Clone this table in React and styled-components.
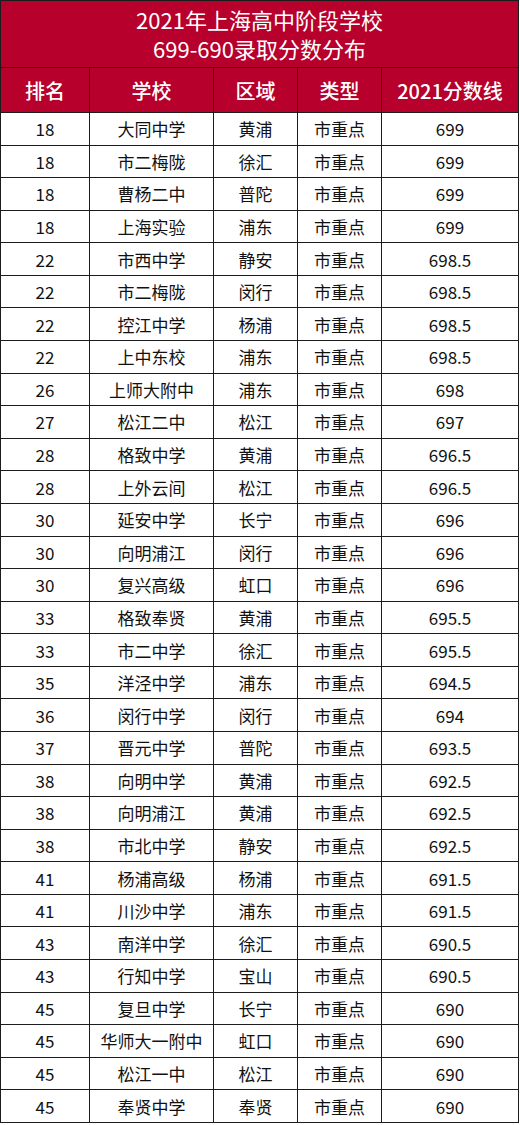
import React from 'react';
import styled, { createGlobalStyle } from 'styled-components';

const GlobalStyle = createGlobalStyle`
  body {
    margin: 0;
    background: #ffffff;
    font-family: "Noto Sans CJK SC", "Noto Sans", sans-serif;
  }
`;

const RED = '#b7002c';
const LINE = '#1c1c1c';
const COLS = '89px 124px 84px 84px 137px';

const Table = styled.div`
  width: 518px;
  border-left: 1px solid ${LINE};
  border-top: 1px solid ${LINE};
  display: flex;
  flex-direction: column;
`;

const Title = styled.div`
  height: 66px;
  background: ${RED};
  color: #ffffff;
  border-right: 1px solid ${LINE};
  border-bottom: 1px solid ${LINE};
  display: flex;
  flex-direction: column;
  align-items: center;
  justify-content: center;
  font-size: 22px;
  line-height: 29px;
  font-weight: 400;
`;

const Row = styled.div`
  display: grid;
  grid-template-columns: ${COLS};
  height: ${({ $head }) => ($head ? '45px' : '32.58px')};
  background: ${({ $head }) => ($head ? RED : '#ffffff')};
  color: ${({ $head }) => ($head ? '#ffffff' : '#111111')};
  font-size: ${({ $head }) => ($head ? '20px' : '17px')};
  font-weight: ${({ $head }) => ($head ? 500 : 400)};
`;

const Cell = styled.div`
  display: flex;
  align-items: center;
  justify-content: center;
  border-right: 1px solid ${LINE};
  border-bottom: 1px solid ${LINE};
  white-space: nowrap;
`;

const rows = [
  ['18', '大同中学', '黄浦', '699'],
  ['18', '市二梅陇', '徐汇', '699'],
  ['18', '曹杨二中', '普陀', '699'],
  ['18', '上海实验', '浦东', '699'],
  ['22', '市西中学', '静安', '698.5'],
  ['22', '市二梅陇', '闵行', '698.5'],
  ['22', '控江中学', '杨浦', '698.5'],
  ['22', '上中东校', '浦东', '698.5'],
  ['26', '上师大附中', '浦东', '698'],
  ['27', '松江二中', '松江', '697'],
  ['28', '格致中学', '黄浦', '696.5'],
  ['28', '上外云间', '松江', '696.5'],
  ['30', '延安中学', '长宁', '696'],
  ['30', '向明浦江', '闵行', '696'],
  ['30', '复兴高级', '虹口', '696'],
  ['33', '格致奉贤', '黄浦', '695.5'],
  ['33', '市二中学', '徐汇', '695.5'],
  ['35', '洋泾中学', '浦东', '694.5'],
  ['36', '闵行中学', '闵行', '694'],
  ['37', '晋元中学', '普陀', '693.5'],
  ['38', '向明中学', '黄浦', '692.5'],
  ['38', '向明浦江', '黄浦', '692.5'],
  ['38', '市北中学', '静安', '692.5'],
  ['41', '杨浦高级', '杨浦', '691.5'],
  ['41', '川沙中学', '浦东', '691.5'],
  ['43', '南洋中学', '徐汇', '690.5'],
  ['43', '行知中学', '宝山', '690.5'],
  ['45', '复旦中学', '长宁', '690'],
  ['45', '华师大一附中', '虹口', '690'],
  ['45', '松江一中', '松江', '690'],
  ['45', '奉贤中学', '奉贤', '690'],
];

export default function App() {
  return (
    <>
      <GlobalStyle />
      <Table>
        <Title>
          <div>2021年上海高中阶段学校</div>
          <div>699-690录取分数分布</div>
        </Title>
        <Row $head>
          <Cell>排名</Cell>
          <Cell>学校</Cell>
          <Cell>区域</Cell>
          <Cell>类型</Cell>
          <Cell>2021分数线</Cell>
        </Row>
        {rows.map(([rank, school, area, score], i) => (
          <Row key={i}>
            <Cell>{rank}</Cell>
            <Cell>{school}</Cell>
            <Cell>{area}</Cell>
            <Cell>市重点</Cell>
            <Cell>{score}</Cell>
          </Row>
        ))}
      </Table>
    </>
  );
}
